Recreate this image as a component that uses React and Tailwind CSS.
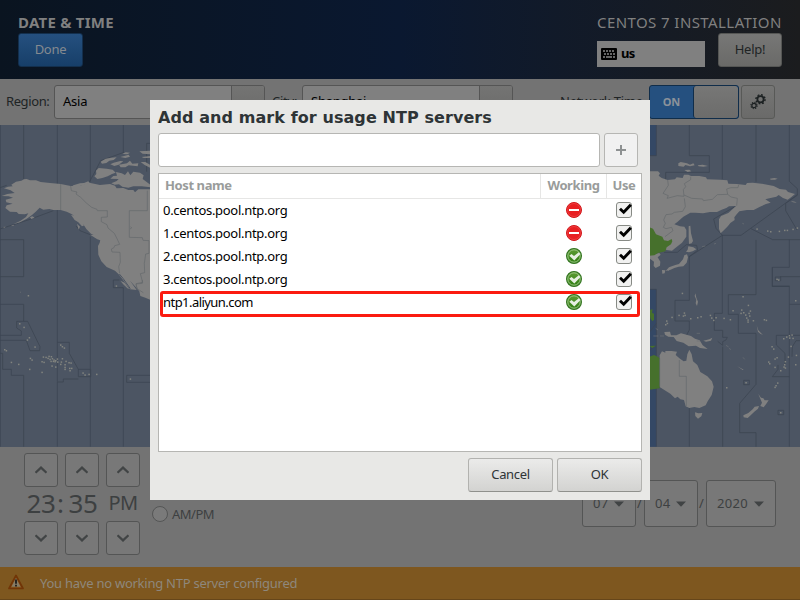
import React from "react";

const SEA = "#4c5563";
const LAND = "#808080";
const EDGE = "#3c4552";

const WEST_ISLES = [[85,527],[59,611],[72,622],[88,653],[82,660],[105,681],[14,689],[19,692],[182,675],[187,680],[193,684],[34,727],[56,733],[91,715],[96,720],[89,748],[126,757],[126,725],[132,727],[130,711],[138,712],[147,709],[154,710],[144,715],[150,718],[157,716],[162,720],[153,724],[160,724],[167,722],[172,717],[165,725],[173,726],[187,716],[182,733],[156,738],[167,741],[184,726],[198,724],[195,734],[195,742],[195,748],[207,728],[213,729],[209,745],[215,745],[210,752],[249,759],[255,765],[267,763],[290,763],[391,777],[349,498]];
const EAST_ISLES = [[127,520],[96,592],[80,603],[82,610],[77,614],[117,586],[133,579],[135,586],[130,588],[152,596],[173,593],[183,590],[211,586],[215,594],[221,601],[228,593],[252,595],[271,599],[309,530],[325,556],[279,572],[305,570],[311,578],[331,573],[327,580],[303,580],[317,585],[320,594],[329,588],[324,600],[324,606],[340,602],[373,599],[379,601],[467,542],[448,647],[456,645],[459,655],[449,654],[440,651],[431,656],[396,680],[401,687],[453,679],[405,717],[386,726],[389,731],[411,713],[445,711],[469,706],[467,734],[436,725],[434,734],[432,741],[436,744],[422,752],[405,742],[413,789],[408,797],[405,802],[318,788],[260,803],[422,878],[351,327],[383,333],[392,335],[418,334],[434,331],[442,331],[459,328],[472,324],[411,478],[416,480]];

function WorldMap() {
  return (
    <svg className="block h-[322px] w-[800px] shrink-0" viewBox="0 125 800 322">
      <rect x="0" y="125" width="800" height="322" fill={SEA} />
      <g transform="translate(0 120) scale(.333333)">
        <g fill="none" stroke={EDGE} strokeWidth="2.4">
          <path d="M1 15V980M71 15V178M71 359V470H0M0 359H71M172 15V785M271 15V185M271 350V748M370 15V98M370 503V980M71 766V980" />
          <path d="M268 186L285 155L302 122L372 97M0 203L20 196M0 327L90 298L160 272M228 318L240 332L296 354M440 70V155M440 70H452M340 480V503H370M340 480H358" />
          <path d="M0 553H71V604H83L120 680L119 692H90L79 661H0M50 604H71M50 604V624L64 633V646H0M8 700V748H34V766H71M0 700H8M172 786V980M271 748V980M172 667H208V700L235 748H271M235 748V770H272V748M235 777H190V786H172M380 766H452M380 766V787H452" />
        </g>
        <g fill={LAND}>
          <path d="M5 228L22 222L44 219L32 211L12 205L24 200L38 199L34 194L48 185L64 182L72 178L80 177L90 181L108 181L122 186L150 189L182 192L212 198L240 197L268 188L300 195L330 192L345 197L350 205L370 204L385 210L400 210L405 217L415 208L452 208V540L436 533L421 528L418 514L405 499L390 482L410 510L390 508L374 486L356 463L345 452L320 441L304 424L295 404L294 378L299 368L301 359L285 347L273 341L259 327L250 313L242 311L228 293L216 283L200 275L182 270L160 270L148 267L130 269L119 263L107 275L96 285L80 296L60 307L40 313L62 302L78 291L85 280L74 283L56 282L50 276L30 275L16 264L20 256L38 251L19 247L17 239L39 233L26 229Z" />
          <path d="M288 152L296 144L320 146L338 149L347 158L336 162L323 169L307 174L292 177L283 169L289 162Z" />
          <path d="M348 156L365 160L375 165L384 154L391 166L400 155L420 158L431 166L428 177L440 186L452 195V202L425 199L400 199L385 203L367 200L357 193L344 194L334 190L350 183L356 177L331 176L340 168L351 167Z" />
          <path d="M302 125L317 116L334 113L350 112L341 120L328 122L319 129L306 131ZM331 133L341 128L361 123L370 124L356 134L343 138ZM357 134L381 130L390 122L397 131L415 130L413 139L386 136L376 142L362 142ZM361 111L386 104L390 110L376 114ZM367 102L377 97L390 98L382 103ZM418 94L450 92V103L428 101ZM425 111L450 108V114L431 114ZM422 126L436 126L450 134V143L434 135Z" />
          <path d="M213 203L220 196L240 190L252 189L265 184L269 190L252 195L235 199ZM213 284L228 289L238 300L247 311L255 315L246 319L235 307L224 300ZM231 311L240 320L236 329ZM270 344L285 345L301 352L305 362L292 358ZM90 292L97 289L104 293L94 297ZM33 317L42 314L40 318ZM9 321L18 320L13 323ZM60 515L63 516L61 518Z" />
          <path d="M361 482L374 488L388 507L382 505L369 492Z" />
        </g>
        <path d="M358 462L369 475L391 506" fill="none" stroke={SEA} strokeWidth="3" />
        <path d="M182 192V270M212 198L214 212L231 216L228 222L242 232L259 249L275 262L291 268L292 272H322V291L304 292V305L321 314L324 324L343 340L353 360L359 373L344 377L342 383L334 387L336 396L360 397L361 427L356 440L359 460M442 212V272H388V352L427 353L429 361L447 362V400L437 402L433 430L434 458L421 461L428 487L408 491L412 509M392 320L395 324L390 327M427 480V490L408 492L411 506L430 518" fill="none" stroke="#64686b" strokeWidth="2" />
        <g fill="#82847f">{WEST_ISLES.map(([x, y], i) => <rect key={i} x={x - 2} y={y - 2} width="4.5" height="4.5" />)}</g>
      </g>
      <g transform="translate(640 120) scale(.333333)">
        <path d="M0 15H49V107H0ZM0 508H49V980H0Z" fill="#344865" />
        <g fill="none" stroke={EDGE} strokeWidth="2.4">
          <path d="M49 15V107H30M148 15V107H208V157H77V180M247 15V178M348 15V185M448 15V184L472 206V226L437 250V272L471 330M148 407V510V541H105V603H148V630L139 646M247 345V580M348 360V524H265V583H295V640H348V793L299 850V938H348V980M448 359V442H397V499H448V980M397 499H448M397 480V499H448M448 553H480M397 480V442" />
          <path d="M290 257L221 297L228 325L247 346H303L472 224M333 326L398 359H480M247 346L148 410M72 397H112L139 374L170 376L173 391L150 408M223 580H247M223 580V631H248V652H262L258 660L248 665V676L233 664M248 680V980M148 842V980M30 508H49V980M49 610L30 635M49 676L30 690M409 646H480M409 646V675L435 700V735M414 735V748L397 770H448M456 710L457 680L468 662H480M420 470H480" />
          <path d="M311 781H328V794H311ZM414 871H431V884H414ZM406 471H422V482H406Z" />
        </g>
        <g fill={LAND}>
          <path d="M28 154H54L60 160L56 167L65 174L83 180L105 178L110 172L128 174L132 164L145 164L153 168L178 168L198 172L201 178L240 179L262 181L265 191L290 192L317 195L321 189L338 188L365 191L401 198L419 207L438 209L444 216L465 222L455 230L443 239L429 234L416 225L409 230L388 235L376 238L392 248L378 252L360 260L341 270L321 270L298 274L290 283L283 292L284 300L271 309L264 318L253 329L242 340L237 327L237 298L243 288L265 279L279 266L288 258L267 259L259 264L245 269L231 276H210L189 280L166 278L151 278L130 290L112 306L103 313L120 319L133 320L139 330V350L126 368L106 384L96 392L80 390L60 380L28 380Z" />
          <path d="M146 319L151 317L153 340L159 363L155 370L147 372L146 350ZM145 379L160 382L169 388L158 394L147 397L138 395L143 389ZM141 403L144 412L140 428L130 439L116 440L103 444L92 449L77 453L87 442L106 435L117 432L129 418L133 406ZM66 450L76 451L74 460L67 461ZM81 449L89 447L87 453ZM30 405L58 399L62 404L53 412L61 425L60 437L47 444L41 438L42 425L30 416Z" />
          <path d="M115 130L122 126L141 130L150 134L160 130L164 136L150 139L136 135L131 140L115 138ZM173 136L188 134L204 138L190 140L176 139ZM133 150L148 149L154 154L143 156ZM390 176L403 174L413 176L405 179L392 179ZM452 243L465 245L470 248L459 247Z" />
          <path d="M59 706L66 694L76 698V693H95L111 695L107 705L120 716L131 724L139 722L142 703L148 689L155 703L159 724L172 735L181 756L202 769L216 784L221 800L215 825L203 844L197 856L178 864L163 861L148 864L137 859L132 840L121 838L113 830L105 835L91 821L60 802Z" />
          <path d="M165 877L175 880L187 879L184 889L174 896L166 888ZM73 636L90 635L93 646L109 646L123 640L153 648L165 656L179 661L188 676L203 687L180 684L168 677L146 679L130 668L110 663L101 651L85 650L75 644ZM190 662L208 658L217 653L213 662L198 665ZM166 520L169 533L174 545L171 558L167 550L169 539L164 528ZM355 822L363 833L370 835L374 841L386 841L379 851L371 862L361 858L366 848ZM344 860L357 858L354 866L343 875L332 886L323 894L311 892L310 886L325 879L338 868ZM292 739L311 749L308 750ZM350 616L355 631L365 641L369 644L362 642L354 635Z" />
        </g>
        <path d="M28 322L39 326L48 343L67 350L72 361L84 363L95 357L97 364L93 373L80 382L76 394L54 399L43 406L28 407ZM28 710L42 705L53 710L59 715V805L28 809ZM28 570L38 568L36 578L42 581L42 600L37 604L31 595ZM28 678L48 677L37 684Z" fill="#46702c" />
        <path d="M83 180L85 196L74 213L69 220L85 227L81 235L93 232L112 227L132 229L130 209L137 200L133 191L152 179V170M132 225L155 235L188 237L190 242L217 238L232 224L263 223L260 207L273 203H294L296 194M263 223L273 231L292 235L290 257M133 235L136 260L128 274L103 277L96 282L78 284L71 300L76 310L70 322L78 326L95 322L99 332L75 350M118 720V769H139V858M59 715V800" fill="none" stroke="#64686b" strokeWidth="2" />
        <g fill="#82847f">{EAST_ISLES.map(([x, y], i) => <rect key={i} x={x - 2} y={y - 2} width="4.5" height="4.5" />)}</g>
        <path d="M40 648H55M60 648H72M170 640H180M170 663H180M258 676L266 681M268 684L272 690M309 712L314 718M307 310L312 312M222 372L228 370M186 380L196 378M47 625L54 630" stroke="#6c7175" strokeWidth="2" />
      </g>
    </svg>
  );
}

function Chevron({ down }) {
  return (
    <svg className="size-3" viewBox="0 0 12 12" fill="none" stroke="#414445" strokeWidth="2.2">
      <path d={down ? "M.5 3.200L6 8.400L11.500 3.200" : "M.5 8.800L6 3.600L11.500 8.800"} />
    </svg>
  );
}

function SpinColumn({ children }) {
  const box = "flex h-[34px] w-[34px] items-center justify-center rounded-[3px] border border-[#545555] bg-[#787878]";
  return (
    <div className="flex w-[34px] flex-col items-center">
      <div className={box}><Chevron /></div>
      <div className="flex h-[34px] items-center justify-center pb-[2px] whitespace-nowrap">{children}</div>
      <div className={box}><Chevron down /></div>
    </div>
  );
}

function DateBox({ width, children }) {
  return (
    <div className={`${width} flex h-[47px] items-center justify-between rounded-[3px] border border-[#545555] bg-[#787878] pr-[11px] pl-[10px]`}>
      <span className="tracking-[0.3px]">{children}</span>
      <svg className="mt-px h-[6px] w-[10px]" viewBox="0 0 10 6"><path d="M0 .5H10L5 5.800Z" fill="#404344" /></svg>
    </div>
  );
}

function Combo({ width, children }) {
  return (
    <div className={`${width} flex h-[34px] overflow-hidden rounded-[3px] border border-[#555555] bg-[#808080]`}>
      <div className="flex flex-1 items-center pb-[2px] pl-2 text-black">{children}</div>
      <div className="w-[33px] border-l border-[#555555] bg-linear-to-b from-[#747473] to-[#6a6a69]" />
    </div>
  );
}

function StatusIcon({ ok }) {
  return ok ? (
    <svg className="size-4" viewBox="0 0 16 16">
      <defs>
        <linearGradient id="okfill" x1="0" y1="0" x2="0" y2="1"><stop stopColor="#5f9d35" /><stop offset="1" stopColor="#2e7d12" /></linearGradient>
      </defs>
      <circle cx="8" cy="8" r="7.400" fill="url(#okfill)" stroke="#347522" strokeWidth="1.200" />
      <circle cx="8" cy="8" r="6.200" fill="none" stroke="#a5cc8e" strokeWidth=".9" />
      <path d="M3.300 7.700L5.500 6L8 8L12.800 4.200L14.500 6L8.300 12.400Z" fill="#e6efe2" />
    </svg>
  ) : (
    <svg className="size-4" viewBox="0 0 16 16">
      <circle cx="8" cy="8" r="7.500" fill="#e81f22" stroke="#cf181b" />
      <circle cx="8" cy="8" r="6.500" fill="none" stroke="#f0484a" strokeWidth=".7" />
      <rect x="3" y="7" width="10" height="2" fill="#fff" />
    </svg>
  );
}

function CheckBox() {
  return (
    <svg className="h-4 w-4" viewBox="0 0 16 16">
      <rect x=".5" y=".5" width="15" height="15" rx="2.500" fill="#f1f1f0" stroke="#878a85" />
      <path d="M4 6.700L7.700 10.200L14.800 2.700" fill="none" stroke="#000" strokeWidth="2.900" />
    </svg>
  );
}

function Gear({ x, y, r }) {
  return (
    <g transform={`translate(${x} ${y})`} fill="none" stroke="#1c2122">
      <circle r={r * 0.6} strokeWidth={r * 0.34} />
      <circle r={r * 0.88} strokeWidth={r * 0.28} strokeDasharray={`${r * 0.346} ${r * 0.345}`} />
    </g>
  );
}

const SERVERS = [
  ["0.centos.pool.ntp.org", false],
  ["1.centos.pool.ntp.org", false],
  ["2.centos.pool.ntp.org", true],
  ["3.centos.pool.ntp.org", true],
  ["ntp1.aliyun.com", true],
];

function NtpDialog() {
  const button = "flex h-[34px] w-[85px] items-center justify-center rounded-[3px] border border-[#b2b2af] border-b-[#8f908c] bg-linear-to-b from-[#ebebea] to-[#d3d3d1] pb-[2px] tracking-[-0.35px] text-[#2e3436]";
  return (
    <div className="absolute top-[100px] left-[150px] flex h-[400px] w-[500px] flex-col bg-[#e8e8e6] px-2 pb-2">
      <h1 className="flex h-[33px] items-center pt-[2px] font-['DejaVu_Sans',sans-serif] text-[16px] font-bold tracking-[0.08px] whitespace-nowrap text-[#2e3436]">Add and mark for usage NTP servers</h1>
      <div className="flex gap-1">
        <div className="h-[34px] w-[442px] rounded-[3px] border border-[#b6b6b3] bg-white" />
        <div className="flex size-[34px] items-center justify-center rounded-[3px] border border-[#b6b6b3] bg-[#f1f1f1]">
          <svg className="size-[10px]" viewBox="0 0 10 10"><path d="M0 5H10M5 0V10" stroke="#8e9192" strokeWidth="2" /></svg>
        </div>
      </div>
      <div className="mt-[6px] h-[279px] border border-[#b6b6b3] bg-white">
        <div className="flex h-[25px] border-b border-[#e6e6e5] font-bold tracking-[-0.4px] text-[#999c9b]">
          <div className="flex flex-1 items-center pb-[2px] pl-[6px]">Host name</div>
          <div className="flex w-[66px] items-center justify-center border-l border-[#e6e6e5] pb-[2px]">Working</div>
          <div className="flex w-[35px] items-center justify-center border-l border-[#e6e6e5] pb-[2px]">Use</div>
        </div>
        {SERVERS.map(([host, ok]) => (
          <div key={host} className="flex h-[23px] items-center pb-[2px] text-black">
            <div className="flex-1 pt-[2px] pl-1"><span className={host.startsWith("ntp") ? "tracking-[-0.55px]" : "tracking-[-0.3px]"}>{host}</span></div>
            <div className="flex w-[66px] justify-center pl-[2px]">
              <StatusIcon ok={ok} />
            </div>
            <div className="flex w-[35px] justify-center"><CheckBox /></div>
          </div>
        ))}
      </div>
      <div className="mt-[6px] flex justify-end gap-1">
        <div className={button}>Cancel</div>
        <div className={button}>OK</div>
      </div>
      <div className="absolute top-[191px] left-[10px] h-[26px] w-[480px] rounded-[3px] border-[3px] border-[#fb1b10]" />
    </div>
  );
}

export default function App() {
  return (
    <div className="relative flex h-[600px] w-[800px] flex-col overflow-hidden bg-[#737373] font-['Noto_Sans','Open_Sans',sans-serif] text-[13px] leading-none tracking-[-0.25px] text-[#202425]">
      <header className="flex h-[79px] shrink-0 justify-between bg-linear-to-r from-[#0a1420] via-[#0a1830] to-[#1b1c1e] pr-[18px] pl-[18px]">
        <div className="pt-[14px]">
          <div className="h-[19px] text-[15px] leading-[16px] font-bold tracking-[0.25px] whitespace-nowrap text-[#808080]">DATE &amp; TIME</div>
          <div className="flex h-[34px] w-[65px] items-center justify-center rounded-[3px] border border-[#132f4d] bg-linear-to-b from-[#25507f] to-[#173f69] pb-[2px] text-[#858a90]">Done</div>
        </div>
        <div className="flex w-[185px] flex-col pt-[14px]">
          <div className="h-[19px] text-[15px] leading-[16px] tracking-[0.42px] whitespace-nowrap text-[#808080]">CENTOS 7 INSTALLATION</div>
          <div className="flex justify-between">
            <div className="mt-[8px] flex h-[26px] w-[108px] items-center gap-1 bg-[#808080] pl-1 font-bold text-black">
              <svg className="h-3 w-4" viewBox="0 0 16 12">
                <rect width="16" height="12" rx="1" />
                <path d="M2 3H14M3 6H14" stroke="#858585" strokeWidth="1.600" strokeDasharray="2 1" />
                <path d="M2 9H4M5 9H11M12 9H14" stroke="#858585" strokeWidth="1.500" />
              </svg>
              <span className="pb-[2px] tracking-[-0.8px]">us</span>
            </div>
            <div className="flex h-[34px] w-[64px] items-center justify-center rounded-[3px] border border-[#555654] bg-linear-to-b from-[#777776] to-[#6a6a68] pb-[2px]">Help!</div>
          </div>
        </div>
      </header>

      <div className="flex h-[46px] shrink-0 items-center pl-[6px]">
        <div className="w-[48px] pb-[2px] tracking-[-0.4px]">Region:</div>
        <Combo width="w-[211px]">Asia</Combo>
        <div className="w-[37px] pb-[2px] pl-[7px]">City:</div>
        <Combo width="w-[211px]">Shanghai</Combo>
        <div className="w-[136px] pb-[2px] pl-[47px] whitespace-nowrap">Network Time</div>
        <div className="flex h-[34px] w-[90px] overflow-hidden rounded-[3px] border border-[#102d4a] bg-[#25507f]">
          <div className="flex w-[43px] shrink-0 items-center justify-center pb-[2px] text-[11px] font-bold tracking-normal text-[#8b929a]">ON</div>
          <div className="flex-1 rounded-[3px] border-l border-[#102d4a] bg-linear-to-b from-[#777776] to-[#6c6c6b]" />
        </div>
        <div className="ml-[2px] flex size-[34px] items-center justify-center rounded-[3px] border border-[#585957] bg-linear-to-b from-[#767675] to-[#6a6a69]">
          <svg className="size-4" viewBox="0 0 16 16"><Gear x={10.5} y={5.3} r={5.2} /><Gear x={4} y={11.5} r={3.6} /></svg>
        </div>
      </div>

      <WorldMap />

      <div className="flex h-[120px] shrink-0 justify-between pt-[6px] pr-6 pl-6 text-[#3d4041]">
        <div className="flex gap-[7px]">
          <SpinColumn><span className="text-[26px] tracking-[-0.3px]">23</span></SpinColumn>
          <div className="relative flex">
            <span className="absolute top-[37px] -left-[8px] text-[26px]">:</span>
            <SpinColumn><span className="pl-[2px] text-[26px] tracking-[-0.3px]">35</span></SpinColumn>
          </div>
          <SpinColumn><span className="text-[20px] tracking-[-0.5px]">PM</span></SpinColumn>
          <div className="ml-[5px] flex flex-col gap-[6px] pt-[31px]">
            <div className="flex items-center gap-1"><span className="size-4 rounded-full border border-[#545555] bg-[#7a7a7a]" />24-hour</div>
            <div className="flex items-center gap-1 tracking-[-0.5px]"><span className="size-4 rounded-full border border-[#545555] bg-[#7a7a7a]" />AM/PM</div>
          </div>
        </div>
        <div className="flex items-start pt-[27px]">
          <DateBox width="w-[54px]">07</DateBox>
          <span className="w-2 pt-[17px] pl-px">/</span>
          <DateBox width="w-[54px]">04</DateBox>
          <span className="w-2 pt-[17px] pl-px">/</span>
          <DateBox width="w-[70px]">2020</DateBox>
        </div>
      </div>

      <footer className="flex h-[33px] shrink-0 items-center border-b border-[#66461a] bg-[#7e571f] pl-2 text-[#8e877c]">
        <svg className="mb-[2px] h-4 w-4" viewBox="0 0 16 16">
          <path d="M8 1.500L15 14.500H1Z" fill="#85551c" stroke="#713507" strokeWidth="1.700" strokeLinejoin="round" />
          <path d="M8 4L12.500 12.800H3.500Z" fill="#887c65" />
          <path d="M8 5.500V9.700M8 10.800V12.500" stroke="#171717" strokeWidth="1.700" />
        </svg>
        <span className="ml-4">You have no working NTP server configured</span>
      </footer>

      <NtpDialog />
    </div>
  );
}
